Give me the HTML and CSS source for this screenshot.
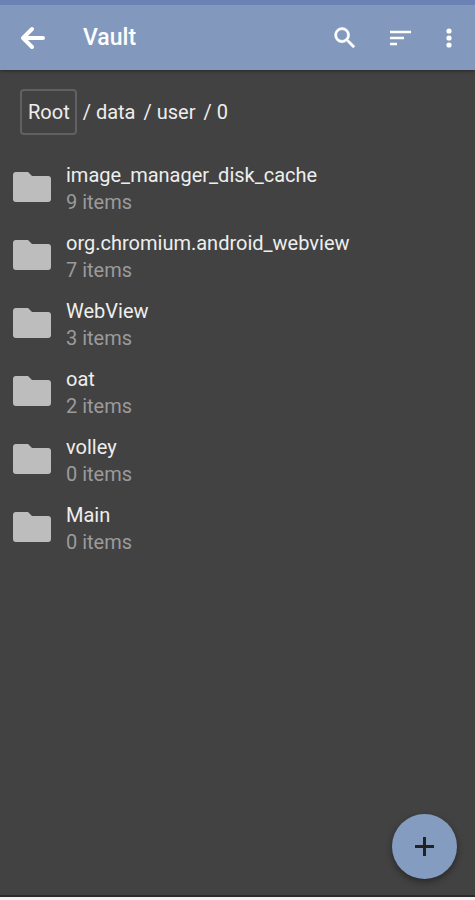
FILE: index.html
```
<!DOCTYPE html>
<html lang="en">
<head>
  <meta charset="UTF-8">
  <meta name="viewport" content="width=device-width, initial-scale=1">
  <title>Vault</title>
  <link rel="stylesheet" href="styles.css">
</head>
<body>

  <header class="toolbar">
    <button class="icon-btn" aria-label="Back">
      <svg width="26" height="24" viewBox="0 0 26 24"><path d="M23 12H4M12 3L3 12l9 9" fill="none" stroke="#fff" stroke-width="4" stroke-linecap="round" stroke-linejoin="round"/></svg>
    </button>
    <h1>Vault</h1>
    <div class="actions">
      <button class="icon-btn" aria-label="Search">
        <svg width="28" height="28" viewBox="0 0 24 24"><path fill="#fff" stroke="#fff" stroke-width=".4" d="M15.500 14h-.79l-.28-.27A6.470 6.470 0 0 0 16 9.500 6.500 6.500 0 1 0 9.500 16c1.610 0 3.090-.59 4.230-1.570l.27.28v.79l5 4.990L20.490 19l-4.990-5zm-6 0C7.010 14 5 11.990 5 9.500S7.010 5 9.500 5 14 7.010 14 9.500 11.990 14 9.500 14z"/></svg>
      </button>
      <button class="icon-btn" aria-label="Sort">
        <svg width="28" height="28" viewBox="0 0 28 28"><path d="M4 8h21M4 14h14M4 20h7" fill="none" stroke="#fff" stroke-width="2.600"/></svg>
      </button>
      <button class="icon-btn more" aria-label="More options">
        <svg width="28" height="28" viewBox="0 0 28 28" fill="#fff"><circle cx="14" cy="7" r="2.600"/><circle cx="14" cy="14" r="2.600"/><circle cx="14" cy="21" r="2.600"/></svg>
      </button>
    </div>
  </header>

  <main>
    <nav class="path" aria-label="Path">
      <a href="#" class="root">Root</a>
      <a href="#">/ data</a>
      <a href="#">/ user</a>
      <a href="#">/ 0</a>
    </nav>

    <ul class="folders">
      <li>
        <svg class="folder" viewBox="0 0 38 32"><path d="M3 1h12l4 4h16q3 0 3 3v20q0 3-3 3H3q-3 0-3-3V4q0-3 3-3z"/></svg>
        <div>
          <h2>image_manager_disk_cache</h2>
          <p>9 items</p>
        </div>
      </li>
      <li>
        <svg class="folder" viewBox="0 0 38 32"><path d="M3 1h12l4 4h16q3 0 3 3v20q0 3-3 3H3q-3 0-3-3V4q0-3 3-3z"/></svg>
        <div>
          <h2>org.chromium.android_webview</h2>
          <p>7 items</p>
        </div>
      </li>
      <li>
        <svg class="folder" viewBox="0 0 38 32"><path d="M3 1h12l4 4h16q3 0 3 3v20q0 3-3 3H3q-3 0-3-3V4q0-3 3-3z"/></svg>
        <div>
          <h2>WebView</h2>
          <p>3 items</p>
        </div>
      </li>
      <li>
        <svg class="folder" viewBox="0 0 38 32"><path d="M3 1h12l4 4h16q3 0 3 3v20q0 3-3 3H3q-3 0-3-3V4q0-3 3-3z"/></svg>
        <div>
          <h2>oat</h2>
          <p>2 items</p>
        </div>
      </li>
      <li>
        <svg class="folder" viewBox="0 0 38 32"><path d="M3 1h12l4 4h16q3 0 3 3v20q0 3-3 3H3q-3 0-3-3V4q0-3 3-3z"/></svg>
        <div>
          <h2>volley</h2>
          <p>0 items</p>
        </div>
      </li>
      <li>
        <svg class="folder" viewBox="0 0 38 32"><path d="M3 1h12l4 4h16q3 0 3 3v20q0 3-3 3H3q-3 0-3-3V4q0-3 3-3z"/></svg>
        <div>
          <h2>Main</h2>
          <p>0 items</p>
        </div>
      </li>
    </ul>
  </main>

  <button class="fab" aria-label="Add">
    <svg width="19" height="19" viewBox="0 0 19 19"><path d="M9.500 0v19M0 9.500h19" stroke="#222" stroke-width="3"/></svg>
  </button>

</body>
</html>
```
FILE: styles.css
```
* {
  box-sizing: border-box;
}

body {
  display: flex;
  flex-direction: column;
  min-height: 100vh;
  margin: 0;
  font-family: Roboto, sans-serif;
  font-size: 20px;
  line-height: 28px;
  color: #eee;
  background: #424242;
  border-bottom: 3px solid #f2f2f2;
}

h1, h2, p, ul {
  margin: 0;
  padding: 0;
}

a {
  color: inherit;
  text-decoration: none;
}

button {
  padding: 0;
  border: none;
  cursor: pointer;
}

svg {
  display: block;
}

/* Toolbar */
.toolbar {
  display: flex;
  align-items: center;
  height: 70px;
  padding: 0 12px 0 20px;
  background: #8299bd;
  border-top: 5px solid #6b82b7;
  box-shadow: 0 1px 3px rgba(0,0,0,0.4);
}

.toolbar h1 {
  margin-left: 37px;
  font-size: 23px;
  font-weight: 500;
  line-height: 30px;
  color: #fff;
}

.icon-btn {
  background: none;
}

.actions {
  display: flex;
  gap: 27px;
  margin-left: auto;
}

.actions .more {
  margin-left: -6px;
}

main {
  flex: 1;
  border-bottom: 2px solid #2b2b2b;
}

/* Path */
.path {
  display: flex;
  align-items: center;
  gap: 8px;
  padding: 19px 20px 20px;
}

.path .root {
  padding: 7px 5px 7px 6px;
  border: 2px solid #616161;
  border-radius: 4px;
  margin-right: -2px;
}

/* Folder list */
.folders {
  list-style: none;
}

.folders li {
  display: flex;
  align-items: center;
  gap: 15px;
  padding: 6px 13px 7px;
}

.folder {
  width: 38px;
  height: 32px;
  margin-bottom: 3px;
  fill: #bdbdbd;
}

.folders h2 {
  font-size: 20px;
  font-weight: 400;
  line-height: 28px;
}

.folders p {
  line-height: 27px;
  color: #9b9b9b;
}

.fab {
  position: fixed;
  right: 18px;
  bottom: 21px;
  display: flex;
  align-items: center;
  justify-content: center;
  width: 65px;
  height: 65px;
  border-radius: 50%;
  background: #849cc0;
  box-shadow: 0 3px 7px rgba(0,0,0,0.4);
}
```
